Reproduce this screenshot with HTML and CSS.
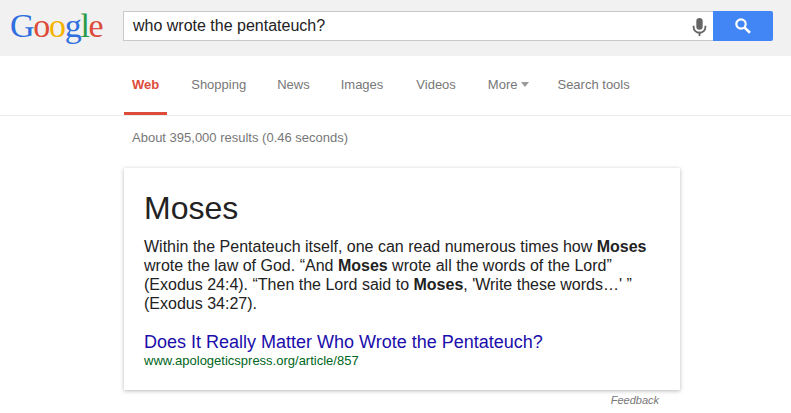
FILE: index.html
```html
<!DOCTYPE html>
<html lang="en">
<head>
<meta charset="utf-8">
<title>who wrote the pentateuch? - Google Search</title>
<link rel="stylesheet" href="styles.css">
</head>
<body>
<header class="topbar">
  <div class="logo"><span class="b">G</span><span class="r">o</span><span class="y">o</span><span class="b">g</span><span class="g">l</span><span class="r">e</span></div>
  <form class="search">
    <div class="box">
      <span class="query">who wrote the pentateuch?</span>
      <svg class="mic" width="15" height="20" viewBox="0 0 16 22"><rect x="4.5" y="1" width="7" height="13" rx="3.5" fill="#666"/><path d="M1.5 9.5v1.5a6.5 6.5 0 0 0 13 0V9.5" fill="none" stroke="#666" stroke-width="2"/><rect x="7" y="16" width="2" height="5" fill="#666"/></svg>
    </div>
    <div class="go">
      <svg width="18" height="18" viewBox="0 0 18 18"><circle cx="7" cy="7" r="4.7" fill="none" stroke="#fff" stroke-width="2.2"/><path d="M10.6 10.6 16 15.8" stroke="#fff" stroke-width="2.6" fill="none"/></svg>
    </div>
  </form>
</header>
<nav class="tabs">
  <a class="tab active">Web</a>
  <a class="tab tight">Shopping</a>
  <a class="tab tight">News</a>
  <a class="tab loose">Images</a>
  <a class="tab">Videos</a>
  <a class="tab more">More<i class="caret"></i></a>
  <a class="tab">Search tools</a>
</nav>
<main class="content">
  <p class="stats">About 395,000 results (0.46 seconds)</p>
  <section class="card">
    <h1 class="answer">Moses</h1>
    <p class="snippet">Within the Pentateuch itself, one can read numerous times how <b>Moses</b> wrote the law of God. “And <b>Moses</b> wrote all the words of the Lord” (Exodus 24:4). “Then the Lord said to <b>Moses</b>, 'Write these words…' ” (Exodus 34:27).</p>
    <a class="title">Does It Really Matter Who Wrote the Pentateuch?</a>
    <div class="url">www.apologeticspress.org/article/857</div>
  </section>
  <div class="feedback">Feedback</div>
</main>
</body>
</html>
```
FILE: styles.css
```css
html, body { margin: 0; padding: 0; }
body { background: #fff; font-family: "Liberation Sans", Arial, sans-serif; color: #222; width: 791px; height: 413px; overflow: hidden; }
.topbar { height: 56px; background: #f1f1f1; display: flex; box-sizing: border-box; padding-top: 11px; }
.logo { width: 123px; box-sizing: border-box; padding-left: 10px; font-family: "Liberation Serif", serif; font-size: 34px; line-height: 29px; letter-spacing: -1.3px; white-space: nowrap; }
.b { color: #2f6fe0; } .r { color: #dd4b39; } .y { color: #f4b400; } .g { color: #2a9a4a; }
.search { display: flex; height: 30px; }
.box { width: 590px; height: 30px; box-sizing: border-box; border: 1px solid #c9c9c9; border-right: 0; background: #fff; display: flex; align-items: center; justify-content: space-between; padding: 0 6px 0 9px; }
.query { font-size: 16px; color: #222; }
.mic { margin-top: 1px; }
.go { width: 60px; height: 30px; background: #4285f4; border-radius: 0 2px 2px 0; display: flex; align-items: center; justify-content: center; }
.tabs { height: 60px; box-sizing: border-box; border-bottom: 1px solid #ebebeb; display: flex; padding-left: 124px; font-size: 13px; color: #777; }
.tab { box-sizing: border-box; height: 59px; padding: 0 8px; line-height: 57px; margin-right: 16px; white-space: nowrap; }
.tab.active { color: #dd4b39; font-weight: bold; border-bottom: 3px solid #dd4b39; margin-right: 16px; padding-right: 8px; }
.tight { margin-right: 15px; }
.loose { margin-right: 17px; }
.more { margin-right: 12px; }
.caret { display: inline-block; margin-left: 4px; vertical-align: 2px; border: 4.5px solid transparent; border-top: 5px solid #999; border-bottom: 0; }
.content { padding-left: 124px; }
.stats { margin: 0; padding-left: 8px; height: 52px; line-height: 44px; font-size: 13px; color: #777; }
.card { width: 556px; height: 222px; box-sizing: border-box; background: #fff; box-shadow: 0 1px 4px rgba(0,0,0,.28); padding: 21px 20px 0; }
.answer { margin: 0; font-size: 32px; font-weight: normal; line-height: 39px; color: #222; }
.snippet { margin: 9px 0 0; font-size: 16px; line-height: 19px; color: #222; }
.title { display: block; margin-top: 19px; font-size: 18px; line-height: 21px; color: #1a0dab; }
.url { font-size: 13px; line-height: 16px; color: #006621; }
.feedback { width: 535px; text-align: right; margin-top: 3px; font-size: 11px; line-height: 14px; font-style: italic; color: #777; }
```
